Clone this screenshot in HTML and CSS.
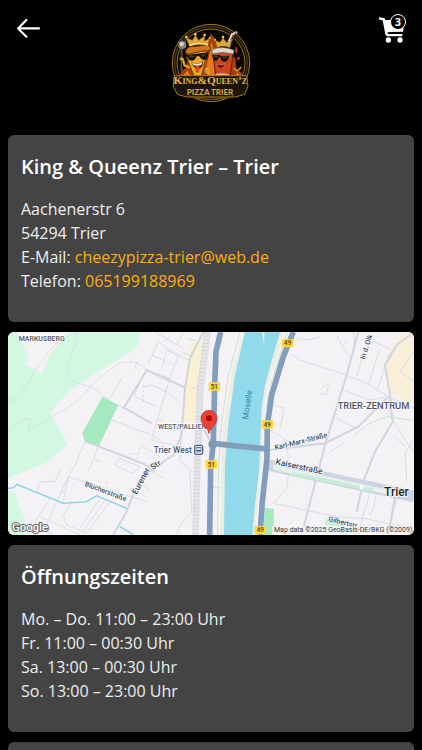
FILE: index.html
```
<!DOCTYPE html>
<html lang="de">
<head>
    <meta charset="UTF-8">
    <meta name="viewport" content="width=device-width, initial-scale=1.0">
    <title>King & Queenz Trier</title>
    <link rel="stylesheet" href="styles.css">
</head>
<body>
    <header class="header">
        <a class="back" href="#" aria-label="Zurück">
            <svg viewBox="0 0 22 18" fill="none" stroke="#fff" stroke-width="2" stroke-linecap="round" stroke-linejoin="round">
                <path d="M21 9H1M9 1L1 9l8 8"/>
            </svg>
        </a>
        <a class="logo" href="#" aria-label="King & Queen'z Pizza Trier">
            <svg viewBox="5 0 288 288">
                <!-- rings -->
                <circle cx="149" cy="144" r="116" fill="#0b0804" stroke="#a47a24" stroke-width="3"/>
                <circle cx="149" cy="144" r="109" fill="none" stroke="#4d3810" stroke-width="4"/>
                <circle cx="149" cy="144" r="102" fill="none" stroke="#9b7222" stroke-width="3"/>
                <!-- flames -->
                <path d="M60 188C52 172 64 160 72 162L84 120L112 104L134 100C128 82 150 70 148 54C166 76 164 86 170 100L196 110L222 130L226 170C240 164 248 180 242 192Z" fill="#a93d0b"/>
                <path d="M140 186C132 150 142 110 150 82C164 110 158 150 160 186ZM64 188C66 176 74 174 78 166L92 190ZM216 188L230 172L238 190Z" fill="#e87916"/>
                <path d="M224 94q8 10 2 22q-8-8-2-22M228 128q6-6 8 0q-2 8-8 8z" fill="#c2410f"/>
                <!-- sceptre and arm -->
                <path d="M62 76L60 168" stroke="#5d4b36" stroke-width="6"/>
                <circle cx="63" cy="90" r="12" fill="#85817a"/>
                <circle cx="61" cy="87" r="7" fill="#d2cec6"/>
                <path d="M56 134q8-8 10 4l4 14l18 6" fill="none" stroke="#dba125" stroke-width="7"/>
                <!-- pizza slice -->
                <path d="M78 108Q108 94 146 98L142 120L118 188H100L76 128Z" fill="#eeac25" stroke="#6d330a" stroke-width="3"/>
                <path d="M142 104L122 188" stroke="#a14a0e" stroke-width="9"/>
                <path d="M72 112Q74 94 98 94L136 91Q152 92 147 107L120 109L80 118Z" fill="#cf741b" stroke="#632c0b" stroke-width="3"/>
                <path d="M74 120L142 112L138 132Q122 140 114 124L106 124Q98 144 82 134Z" fill="#171512"/>
                <path d="M84 123l15 1M119 121l14-2" stroke="#7c776b" stroke-width="2"/>
                <path d="M90 142Q108 150 126 138Q124 164 108 162Q96 160 90 142Z" fill="#521b0b"/>
                <path d="M92 143Q108 151 124 140L120 150Q106 155 95 150Z" fill="#f2ead3"/>
                <path d="M101 155q8-6 14 0l-2 16q-6 6-10-2z" fill="#df3e28"/>
                <path d="M130 172q-2-20 12-14q8 8 2 24z" fill="#d99a25"/>
                <!-- crown of the slice -->
                <path d="M84 94L74 68L93 76L102 60L112 76L130 62L130 78L145 70L140 92Q110 84 84 94Z" fill="#e0a936" stroke="#76500e" stroke-width="2"/>
                <path d="M84 92Q112 80 140 90" fill="none" stroke="#ffe28b" stroke-width="4"/>
                <g fill="#f5cd65"><circle cx="75" cy="66" r="4"/><circle cx="102" cy="58" r="4"/><circle cx="130" cy="60" r="4"/><circle cx="145" cy="69" r="3"/></g>
                <!-- cup -->
                <path d="M154 112H216L206 186H164Z" fill="#cd461b" stroke="#651806" stroke-width="3"/>
                <path d="M152 104Q184 90 218 106L216 117Q184 108 153 117Z" fill="#ddd6cc" stroke="#70675c" stroke-width="2"/>
                <path d="M152 120H174L180 124L203 122Q202 140 188 140Q179 138 178 128L172 127Q168 142 156 136Z" fill="#171311"/>
                <path d="M158 123l12 1M184 127l12-1" stroke="#88785d" stroke-width="2"/>
                <path d="M165 148Q180 154 192 146Q186 162 177 160Q168 160 165 148Z" fill="#571010" stroke="#f0694f" stroke-width="2"/>
                <path d="M160 181q20-8 44 0" fill="none" stroke="#e6b69d" stroke-width="4"/>
                <path d="M218 160l10 8l12-12" fill="none" stroke="#d99a25" stroke-width="5"/>
                <path d="M167 98L161 76L176 82L185 68L195 82L211 76L206 98Q186 90 167 98Z" fill="#e0a936" stroke="#76500e" stroke-width="2"/>
                <g fill="#f5cd65"><circle cx="161" cy="74" r="3"/><circle cx="185" cy="66" r="4"/><circle cx="211" cy="74" r="3"/></g>
                <path d="M202 80L212 58L228 51" fill="none" stroke="#e9ddd0" stroke-width="6"/>
                <path d="M206 72l5 2M213 60l5 3M222 52l3 4" stroke="#c6492e" stroke-width="4"/>
                <!-- name plate -->
                <path d="M38 182H256L260 214L250 238L222 246H76L48 238L36 214Z" fill="#1b1509" stroke="#a77c25" stroke-width="3"/>
                <path d="M80 242Q148 266 218 242" fill="none" stroke="#725418" stroke-width="3"/>
                <text class="logo-name" x="147" y="208" text-anchor="middle">King&amp;Queen’z</text>
                <text class="logo-sub" x="146" y="239" text-anchor="middle">PIZZA TRIER</text>
            </svg>
        </a>
        <button class="cart" type="button" aria-label="Warenkorb">
            <svg viewBox="24 24 84 90" fill="#fff">
                <path d="M28 37L42 39Q45 40 46 45L58 45L104 50L99 80L55 81L56 87H97V94H52Q47 94 46 88L38 46L28 44Q24 40 28 37Z"/>
                <path d="M52 84H98" stroke="#000" stroke-width="3"/>
                <circle cx="55" cy="105" r="8"/>
                <circle cx="90" cy="105" r="8"/>
            </svg>
            <span class="badge">3</span>
        </button>
    </header>

    <main class="content">
        <section class="card">
            <h2>King &amp; Queenz Trier – Trier</h2>
            <p>
                Aachenerstr 6<br>
                54294 Trier<br>
                E-Mail: <a href="mailto:cheezypizza-trier@web.de">cheezypizza-trier@web.de</a><br>
                Telefon: <a href="tel:065199188969">065199188969</a>
            </p>
        </section>

        <a class="map" href="#" aria-label="Karte">
            <svg viewBox="24 21 1218 609">
                <!-- ground and parks -->
                <rect x="24" y="21" width="1218" height="609" fill="#f4f2f4"/>
                <path d="M24 21H50L85 95L78 118L125 147L150 90L185 45L215 21H420L415 60L375 90L270 155L205 200L150 265L203 357L145 410L50 450L24 458Z" fill="#d3f8e2"/>
                <path d="M24 500H45L60 550L75 580L70 630H24Z" fill="#d3f8e2"/>
                <path d="M307 215L355 240L297 362L255 350L247 325Z" fill="#a6e8c0"/>
                <path d="M572 55L612 45L600 180L588 290H550L556 150Z" fill="#faf0d4"/>
                <path d="M1210 21L1170 80L1155 140L1165 200L1242 240V21Z" fill="#faf0d9"/>
                <path d="M794 548L822 552L820 630H790Z" fill="#a6e8c0"/>
                <path d="M978 580L1060 592L1040 605L975 600Z" fill="#c5f2d6"/>

                <!-- footpaths -->
                <g class="path">
                    <path d="M230 21C170 40 150 75 110 130C80 180 60 220 24 230"/>
                    <path d="M230 21C240 60 190 110 205 155C220 175 250 180 270 183C250 220 210 245 170 265C140 285 110 310 85 312L92 285C80 270 50 300 24 318"/>
                    <path d="M270 183L300 205L330 225M270 185C310 150 340 120 370 112L410 110L440 135"/>
                </g>

                <!-- small streets -->
                <g class="street">
                    <path d="M330 220L368 155M355 240L455 295M335 285L455 330L480 345M440 135L555 188L540 360"/>
                    <path d="M440 135L372 248M440 135L510 160L470 290L455 345L540 365"/>
                    <path d="M402 213L470 245M425 160L402 213M430 185L455 180L500 200L540 232M470 280L490 290"/>
                    <path d="M410 110L405 130M445 115L475 50L535 95L505 165M455 90L520 120M485 130L500 75L565 105"/>
                    <path d="M465 21L550 70M495 50L510 32M530 60L550 21M545 80L575 95M560 40L600 50"/>
                    <path d="M297 362L265 437M255 350L225 420L205 455L165 540L140 600L110 629M205 455L250 470L440 530"/>
                    <path d="M185 425L165 470H120L112 500M180 500H195M280 400L305 412"/>
                    <path d="M360 395L345 420L395 445L420 425L360 400M440 430L490 460M420 360L480 395M430 480L450 500"/>
                    <path d="M190 530L205 455M215 530L190 575L200 600L260 625L330 530M300 520L240 610M315 525L250 620M150 520L100 600L160 629M120 575L240 629"/>
                    <path d="M545 290L540 410L575 435M575 185L600 195M570 435L575 560L540 600L530 629"/>
                    <path d="M640 230L660 240M640 320L670 315M635 486L665 490"/>
                    <path d="M870 85L900 105L1040 150L1110 180M890 40L930 45L960 35M820 240L852 250L840 310M800 310L860 345L865 400M1110 180L1165 215"/>
                    <path d="M1010 30L1030 70L1055 105M1030 60L1040 45M1060 21L1065 60L1040 150M1110 21L1070 155M1100 40L1175 75M1140 70L1105 180M1170 80L1130 200"/>
                    <path d="M1030 195L1110 225L1165 215L1242 250M1010 280L1070 310L1165 215M1030 355L990 380M1165 215L1175 280L1242 385M1180 330L1215 365M1242 340L1215 385L1220 470"/>
                    <path d="M865 450L860 490L820 535L1010 575L1090 580L1242 610M1110 505L1090 570L1075 629M1190 520L1165 629M1130 500L1120 550L1110 570"/>
                    <path d="M962 195L985 175L980 210L960 205M1240 80L1200 140L1242 170"/>
                </g>

                <!-- wider streets -->
                <g class="road">
                    <path d="M610 21L570 100L555 190L545 330L520 390L430 450L395 520L380 560L340 629"/>
                    <path d="M255 350L290 362L440 420L465 440"/>
                    <path d="M440 135L372 248L455 295M440 135L555 188"/>
                    <path d="M1075 21L1040 150L975 360L905 629"/>
                    <path d="M808 375L975 355L1075 305L1160 220M1242 21L1190 60L1155 120L1170 210L1178 290L1125 380L1090 470L1070 560"/>
                    <path d="M1185 515L1165 629M605 300L640 365"/>
                </g>
                <path d="M390 385L415 390L420 365M430 180V235M320 470V490" class="green-line" stroke-dasharray="8 6"/>
                <path d="M1060 335L1100 300L1160 275L1242 287" class="green-line"/>

                <!-- streams -->
                <path d="M24 490L42 488L50 478L190 535L260 530L290 512L380 550M360 605L400 629" fill="none" stroke="#80d1e8" stroke-width="4"/>

                <!-- railway -->
                <path d="M622 21L600 190L592 400L586 630" fill="none" stroke="#e3e5e9" stroke-width="17"/>
                <path d="M622 21L600 190L592 400L586 630" fill="none" stroke="#ccd0d8" stroke-width="15" stroke-dasharray="2 9"/>
                <path d="M614 21L592 190L584 400L578 630M632 21L610 190L601 400L595 630" fill="none" stroke="#d0d4db" stroke-width="2"/>

                <!-- river -->
                <path d="M728 21L694 150L672 300L664 420L660 630H766L772 540L784 430L788 370L792 250L802 180L832 90L852 21Z" fill="#edeee2"/>
                <path d="M720 21L685 150L664 300L656 420L652 630M862 21L840 90L812 180L799 250" class="green-line"/>
                <path d="M735 21L705 150L685 300L675 420L672 630H757L765 540L778 430L780 370L785 250L795 180L820 90L840 21H794L792 60L786 21Z" fill="#90daec"/>

                <!-- Kaiserstraße -->
                <path d="M803 420L1242 515" fill="none" stroke="#cdd5e0" stroke-width="34"/>
                <path d="M820 427L1190 507" fill="none" stroke="#e9f1ef" stroke-width="14"/>
                <path d="M875 445L1120 495" fill="none" stroke="#c4efd5" stroke-width="10"/>
                <circle cx="1085" cy="487" r="7" fill="#f7faf7"/>

                <!-- federal roads -->
                <g class="highway">
                    <path d="M662 21L648 80L644 180L640 350L632 430L629 630"/>
                    <path d="M880 21L850 95L815 210L802 300L801 400L787 530L780 630"/>
                    <path d="M640 355L700 362L802 372"/>
                </g>
                <circle cx="638" cy="358" r="13" fill="#7d97b8"/>

                <g class="shield">
                    <rect x="626" y="172" width="34" height="25" rx="3"/><text x="643" y="191">51</text>
                    <rect x="617" y="406" width="34" height="25" rx="3"/><text x="634" y="425">51</text>
                    <rect x="846" y="42" width="34" height="25" rx="3"/><text x="863" y="61">49</text>
                    <rect x="785" y="286" width="34" height="25" rx="3"/><text x="802" y="305">49</text>
                    <rect x="764" y="603" width="34" height="25" rx="3"/><text x="781" y="622">49</text>
                </g>

                <!-- labels -->
                <g class="label">
                    <text class="district" x="56" y="47">MARKUSBERG</text>
                    <text class="district" x="474" y="312">WEST/PALLIEN</text>
                    <text class="district big" x="1013" y="253">TRIER-ZENTRUM</text>
                    <text class="station" x="461" y="383">Trier West</text>
                    <text x="253" y="482" transform="rotate(21 253 482)">Blücherstraße</text>
                    <text class="wide" x="410" y="510" transform="rotate(-62 410 510)">Eurener</text>
                    <text class="wide" x="458" y="436" transform="rotate(-34 458 436)">Str.</text>
                    <text x="826" y="375" transform="rotate(-14 826 375)">Karl-Marx-Straße</text>
                    <text class="wide" x="826" y="418" transform="rotate(12 826 418)">Kaiserstraße</text>
                    <text x="1094" y="104" transform="rotate(-72 1094 104)">In d. Olk</text>
                    <text x="984" y="588" transform="rotate(14 984 588)">Gilbertstr.</text>
                    <text class="river" x="744" y="284" transform="rotate(-82 744 284)">Moselle</text>
                    <text class="city" x="1152" y="514">Trier</text>
                </g>
                <rect x="584" y="361" width="24" height="27" rx="6" fill="#fff" stroke="#4a6388" stroke-width="4"/>
                <path d="M589 367H603V379H589ZM591 385L594 380M601 385L598 380" fill="#4a6388" stroke="#4a6388" stroke-width="2"/>
                <path d="M590 372H602" stroke="#fff" stroke-width="4"/>

                <!-- marker -->
                <path d="M627 326C624 306 603 300 603 280A24 24 0 0 1 651 280C651 300 630 306 627 326Z" fill="#ea4335" stroke="#b8251c" stroke-width="2"/>
                <circle cx="627" cy="280" r="9" fill="#a50e0e"/>

                <rect x="816" y="604" width="426" height="26" fill="#f7f6f7" fill-opacity=".8"/>
                <text class="credit" x="1237" y="622" text-anchor="end">Map data ©2025 GeoBasis-DE/BKG (©2009)</text>
                <text class="google" x="36" y="617">Google</text>
            </svg>
        </a>

        <section class="card">
            <h2>Öffnungszeiten</h2>
            <p>
                Mo. – Do. 11:00 – 23:00 Uhr<br>
                Fr. 11:00 – 00:30 Uhr<br>
                Sa. 13:00 – 00:30 Uhr<br>
                So. 13:00 – 23:00 Uhr
            </p>
        </section>

        <section class="card card-last"></section>
    </main>
</body>
</html>
```

FILE: styles.css
```
* {
    box-sizing: border-box;
}

body {
    margin: 0;
    min-height: 100vh;
    display: flex;
    flex-direction: column;
    background: #000;
    color: #eee;
    font-family: "Open Sans", "Noto Sans", sans-serif;
    font-size: 16px;
    line-height: 24px;
}

a {
    color: #ffae0c;
    text-decoration: none;
}

svg {
    display: block;
    width: 100%;
}

/* Header */
.header {
    display: grid;
    grid-template-columns: 1fr auto 1fr;
    align-items: start;
    padding: 13px 16px 24px;
}

.back {
    width: 24px;
    padding: 6px 0 0 1px;
}

.logo {
    width: 96px;
    padding-top: 2px;
}

.logo-name {
    fill: #e9b544;
    font-family: "Liberation Serif", serif;
    font-size: 34px;
    font-weight: bold;
    font-variant: small-caps;
}

.logo-sub {
    fill: #d7a43a;
    font-family: Lato, sans-serif;
    font-size: 24px;
    font-weight: 900;
}

.cart {
    position: relative;
    justify-self: end;
    width: 28px;
    padding: 0;
    border: 0;
    background: none;
    color: #fff;
    cursor: pointer;
}

.badge {
    position: absolute;
    top: 1px;
    right: 0;
    width: 16px;
    height: 16px;
    border: 1px solid #fff;
    border-radius: 50%;
    background: #000;
    font: bold 11px/14px "Open Sans", sans-serif;
    text-align: center;
}

/* Content */
.content {
    flex: 1;
    display: flex;
    flex-direction: column;
    gap: 10px;
    padding: 0 8px;
}

.card {
    padding: 20px 13px 29px;
    border-radius: 6px;
    background: #444;
}

.card h2 {
    margin: 0 0 18px;
    color: #fff;
    font-size: 20px;
    font-weight: 600;
    line-height: 24px;
}

.card p {
    margin: 0;
}

.card-last {
    flex: 1;
    padding: 0;
    border-radius: 6px 6px 0 0;
}

/* Map */
.map {
    overflow: hidden;
    border-radius: 6px;
    font-family: Roboto, sans-serif;
}

.path,
.street,
.road,
.highway,
.green-line {
    fill: none;
    stroke-linejoin: round;
}

.path {
    stroke: #cfdadd;
    stroke-width: 2px;
}

.street {
    stroke: #d8dde4;
    stroke-width: 3px;
}

.road {
    stroke: #cfd6df;
    stroke-width: 6px;
}

.highway {
    stroke: #839dbd;
    stroke-width: 17px;
}

.green-line {
    stroke: #afdcc0;
    stroke-width: 2px;
}

.shield rect {
    fill: #fcd53c;
}

.shield text {
    fill: #4b3d12;
    font-size: 19px;
    font-weight: 500;
    text-anchor: middle;
}

.label text {
    fill: #34475f;
    stroke: #fff;
    stroke-width: 4px;
    paint-order: stroke;
    font-size: 21px;
    font-weight: 500;
}

.label .district {
    fill: #4c5461;
}

.label .big {
    font-size: 28px;
}

.label .wide {
    font-size: 25px;
}

.label .station {
    fill: #43597a;
    font-size: 25px;
}

.label .river {
    fill: #3489a3;
    stroke: none;
    font-size: 25px;
    font-weight: 400;
}

.label .city {
    fill: #222;
    font-size: 36px;
}

.credit {
    fill: #333;
    font-size: 21px;
}

.google {
    fill: #fff;
    stroke: #666;
    stroke-width: 6px;
    paint-order: stroke;
    font-size: 34px;
    font-weight: 500;
}
```
